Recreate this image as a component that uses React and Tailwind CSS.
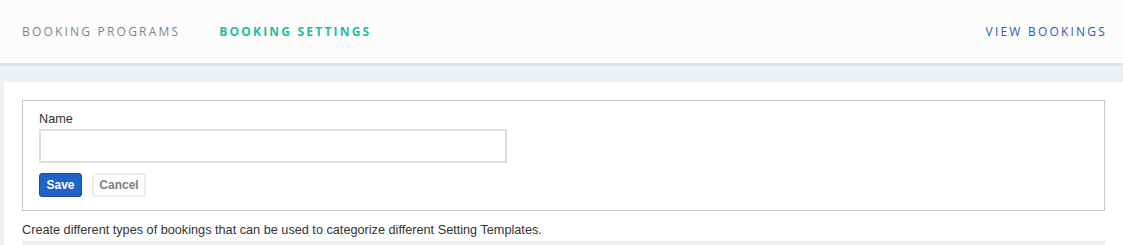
export default function App() {
  return (
    <div className="w-[1123px] h-[245px] overflow-hidden bg-[#edf1f5]">
      <header className="h-[64px] bg-[#fcfcfc] shadow-[0_1px_2px_rgba(0,0,0,0.12)] border-b border-[#e3e6ea] flex items-center justify-between pl-[22px] pr-[16px] font-['Open_Sans',sans-serif] text-[12px] tracking-[2.2px] uppercase relative z-10">
        <nav className="flex items-center gap-[39px]">
          <a className="text-[#7d8694]">Booking Programs</a>
          <a className="text-[#19bfa5] font-bold">Booking Settings</a>
        </nav>
        <a className="text-[#2f58c4]">View Bookings</a>
      </header>
      <main className="mt-[18px] ml-[4px] bg-white pt-[18px] px-[18px] font-['Liberation_Sans',Arial,sans-serif] text-[12.7px] text-[#333]">
        <div className="border border-[#c8c8c8] px-[16px] pt-[11px] pb-[13px]">
          <label className="block leading-[15px] text-[#333]">Name</label>
          <input
            type="text"
            className="mt-[2px] block w-[468px] h-[34px] border-2 border-[#dedede] bg-white outline-none"
          />
          <div className="mt-[10px] flex gap-[10px]">
            <button className="h-[24px] w-[43px] flex items-center justify-center rounded-[3px] bg-[#2062c7] border border-[#1a4a9c] text-white font-bold text-[12px]">
              Save
            </button>
            <button className="h-[24px] w-[54px] flex items-center justify-center rounded-[3px] bg-white border-2 border-[#ececec] text-[#808080] font-bold text-[12px]">
              Cancel
            </button>
          </div>
        </div>
        <p className="mt-[12px] leading-[15px] text-[#333]">
          Create different types of bookings that can be used to categorize different Setting Templates.
        </p>
        <div className="mt-[3px] h-[20px] bg-[#eeeeee]" />
      </main>
    </div>
  );
}
